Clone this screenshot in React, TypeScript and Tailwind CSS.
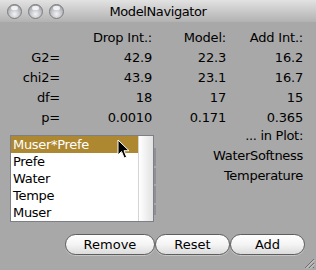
import React from "react";

const stats = [
  { label: "G2=", drop: "42.9", model: "22.3", add: "16.2" },
  { label: "chi2=", drop: "43.9", model: "23.1", add: "16.7" },
  { label: "df=", drop: "18", model: "17", add: "15" },
  { label: "p=", drop: "0.0010", model: "0.171", add: "0.365" },
];

const terms = ["Muser*Prefe", "Prefe", "Water", "Tempe", "Muser"];

function Light() {
  return (
    <div className="w-[15px] h-[15px] rounded-full border border-[#7c7c7c] bg-[radial-gradient(circle_at_50%_70%,#f4f4f4_0%,#c4c6cc_45%,#8b8e95_100%)] relative">
      <div className="absolute left-[3px] top-[1px] w-[7px] h-[4px] rounded-full bg-white/80" />
    </div>
  );
}

function Pill({ label, w }: { label: string; w: string }) {
  return (
    <button
      className={`${w} h-[21px] rounded-full border border-[#5e5e5e] bg-gradient-to-b from-white via-[#f4f4f4] to-[#dcdcdc] text-[13px] text-black leading-none shadow-[0_1px_0_rgba(255,255,255,0.35)]`}
    >
      {label}
    </button>
  );
}

export default function App() {
  return (
    <div
      className="w-[316px] h-[270px] bg-[#a8a8a8] relative overflow-hidden text-black"
      style={{ fontFamily: '"DejaVu Sans", "Liberation Sans", sans-serif' }}
    >
      <div className="h-[22px] bg-gradient-to-b from-[#e2e2e2] to-[#b2b2b2] flex items-center relative">
        <div className="flex gap-[6px] pl-[7px]">
          <Light />
          <Light />
          <Light />
        </div>
        <div className="absolute inset-0 flex items-center justify-center text-[13px] tracking-[-0.4px] pt-[2px]">
          ModelNavigator
        </div>
      </div>

      <div className="grid grid-cols-[60px_92px_74px_77px] mt-[6px] text-[13px] tracking-[-0.2px]">
        <div className="h-[20px]" />
        <div className="h-[20px] flex items-center justify-end">Drop Int.:</div>
        <div className="h-[20px] flex items-center justify-end">Model:</div>
        <div className="h-[20px] flex items-center justify-end">Add Int.:</div>
        {stats.map((r) => (
          <React.Fragment key={r.label}>
            <div className="h-[20px] flex items-center justify-end">{r.label}</div>
            <div className="h-[20px] flex items-center justify-end">{r.drop}</div>
            <div className="h-[20px] flex items-center justify-end">{r.model}</div>
            <div className="h-[20px] flex items-center justify-end">{r.add}</div>
          </React.Fragment>
        ))}
      </div>

      <div className="flex mt-[-2px] pl-[10px] pr-[13px]">
        <div className="flex mt-[9px]">
          <div className="w-[144px] h-[87px] border border-[#7d7f86] bg-white flex relative">
            <div className="w-[127px]">
              {terms.map((t, i) => (
                <div
                  key={t}
                  className={`h-[17px] pl-[2px] flex items-center text-[13px] tracking-[-0.3px] ${
                    i === 0 ? "bg-[#ae8731] text-white" : "text-black"
                  }`}
                >
                  {t}
                </div>
              ))}
            </div>
            <div className="flex-1 border-l border-[#d4d4d4] bg-gradient-to-r from-white to-[#e2e2e2]" />
            <svg
              className="absolute left-[106px] top-[3px]"
              width="14"
              height="21"
              viewBox="0 0 14 21"
            >
              <path
                d="M1 1 L1 16 L4.5 12.5 L7.2 19 L9.6 18 L7 11.7 L12 11.7 Z"
                fill="#000"
                stroke="#fff"
                strokeWidth="1"
                strokeLinejoin="round"
              />
            </svg>
          </div>
          <div className="w-[2px] flex flex-col gap-[2px] pt-[13px]">
            <div className="h-[18px] bg-[#8e9096]" />
            <div className="h-[16px] bg-[#8e9096]" />
            <div className="h-[17px] bg-[#8e9096]" />
            <div className="h-[10px] bg-[#8e9096]" />
          </div>
        </div>
        <div className="flex-1 flex flex-col items-end text-[13px] tracking-[-0.3px]">
          <div className="h-[20px] flex items-center">... in Plot:</div>
          <div className="h-[20px] flex items-center">WaterSoftness</div>
          <div className="h-[20px] flex items-center">Temperature</div>
        </div>
      </div>

      <div className="flex justify-end pr-[11px] mt-[12px]">
        <Pill label="Remove" w="w-[90px]" />
        <Pill label="Reset" w="w-[75px]" />
        <Pill label="Add" w="w-[75px]" />
      </div>

      <svg className="absolute right-[1px] bottom-[1px]" width="12" height="12" viewBox="0 0 12 12">
        <path d="M11 2 L2 11 M11 6 L6 11 M11 10 L10 11" stroke="#6e6e6e" strokeWidth="1" />
        <path d="M11.5 3 L3 11.5 M11.5 7 L7 11.5" stroke="#d0d0d0" strokeWidth="1" />
      </svg>
    </div>
  );
}
